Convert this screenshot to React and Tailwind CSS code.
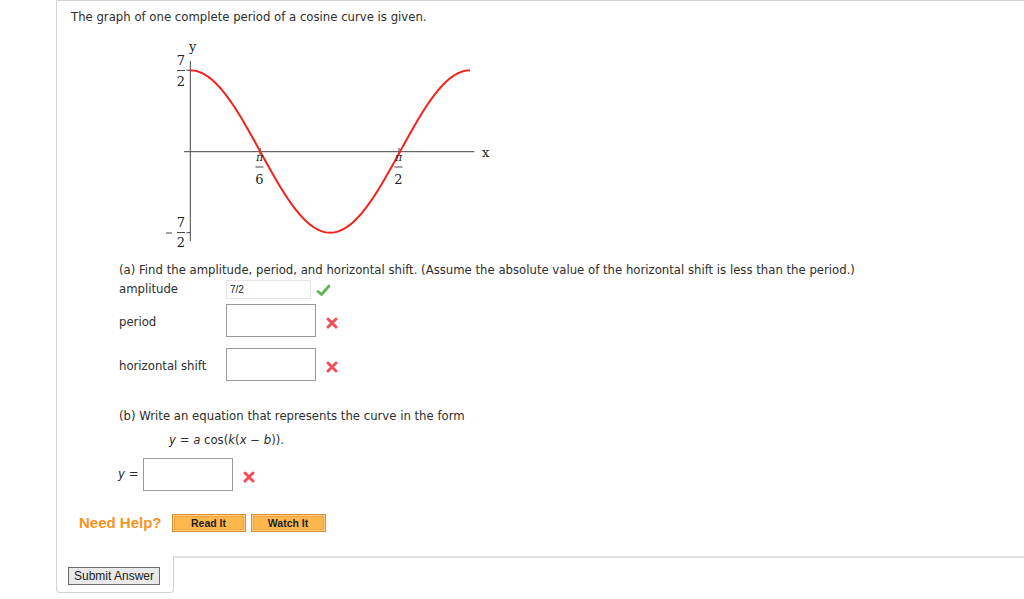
import React from 'react';

// Cosine curve in graph-local pixel coordinates
const X0 = 39.3;
const PERIOD = 279.7;
const MID = 115.5;
const AMP = 81.2;

const curvePath = () => {
    const pts = [];
    for (let i = 0; i <= 140; i++) {
        const x = X0 + (PERIOD * i) / 140;
        const y = MID - AMP * Math.cos((2 * Math.PI * (x - X0)) / PERIOD);
        pts.push(`${i === 0 ? 'M' : 'L'}${x.toFixed(2)} ${y.toFixed(2)}`);
    }
    return pts.join(' ');
};

const Fraction = ({ x, numC, barY, denC, num, den, numItalic }) => (
    <g fontFamily="'DejaVu Serif', 'Liberation Serif', serif" fontSize="13" fill="#222" textAnchor="middle">
        <text x={x} y={numC} dominantBaseline="central" fontStyle={numItalic ? 'italic' : 'normal'} fontSize={numItalic ? 11 : 13}>{num}</text>
        <line x1={x - 4} y1={barY} x2={x + 4} y2={barY} stroke="#333" strokeWidth="0.9" />
        <text x={x} y={denC} dominantBaseline="central">{den}</text>
    </g>
);

const Graph = () => (
    <svg width="350" height="215" className="ml-[80px] mt-[12px] block">
        {/* axes */}
        <line x1="33" y1="115.7" x2="323.3" y2="115.7" stroke="#444" strokeWidth="1" />
        <line x1="39.3" y1="25" x2="39.3" y2="205" stroke="#444" strokeWidth="1" />
        {/* ticks */}
        <line x1="35.5" y1="34.3" x2="39.3" y2="34.3" stroke="#444" strokeWidth="1" />
        <line x1="35.5" y1="196.7" x2="39.3" y2="196.7" stroke="#444" strokeWidth="1" />
        <line x1="109" y1="112" x2="109" y2="119" stroke="#444" strokeWidth="1" />
        <line x1="248" y1="112" x2="248" y2="119" stroke="#444" strokeWidth="1" />
        {/* curve */}
        <path d={curvePath()} stroke="#f5211b" strokeWidth="2" fill="none" />
        {/* labels */}
        <text x="38" y="15" fontFamily="'DejaVu Serif', 'Liberation Serif', serif" fontSize="13" fill="#222">y</text>
        <text x="331" y="121" fontFamily="'DejaVu Serif', 'Liberation Serif', serif" fontSize="13" fill="#222">x</text>
        <Fraction x={30} numC={24} barY={34.5} denC={45} num="7" den="2" />
        <Fraction x={30} numC={186} barY={196.5} denC={206} num="7" den="2" />
        <line x1="15" y1="197" x2="21" y2="197" stroke="#333" strokeWidth="0.9" />
        <Fraction x={108.5} numC={121} barY={131} denC={143} num="π" den="6" numItalic />
        <Fraction x={247.5} numC={121} barY={131} denC={143} num="π" den="2" numItalic />
    </svg>
);

const Check = () => (
    <svg width="15" height="13" viewBox="0 0 15 13" className="ml-[5px] mt-[2px]">
        <path d="M2 7.5 L5.5 10.5 L13 2" stroke="#5fb25a" strokeWidth="2.8" fill="none" strokeLinecap="round" strokeLinejoin="round" />
    </svg>
);

const Cross = () => (
    <svg width="12" height="12" viewBox="0 0 12 12">
        <path d="M2 2 L10 10 M10 2 L2 10" stroke="#ef4f56" strokeWidth="3" strokeLinecap="round" />
    </svg>
);

const HelpButton = ({ label, w }) => (
    <button className={`${w} h-[18px] border border-[#dc8a2c] bg-[#fdb74c] shadow-[inset_0_0_0_1px_#fcd08a,inset_0_0_0_2px_#f0a43e] text-[10.5px] font-bold text-[#1f1f1f] font-['Liberation_Sans',Arial,sans-serif] leading-none`}>
        {label}
    </button>
);

export default function App() {
    return (
        <div className="w-[1024px] h-[599px] bg-white overflow-hidden font-['DejaVu_Sans',Verdana,sans-serif] text-[11.7px] text-[#2e2e2e]">
            <div className="ml-[56px] h-[556px] border-l border-t border-[#d4d4d4] pl-[14px] pt-[9px]">
                <p className="leading-[14px]">The graph of one complete period of a cosine curve is given.</p>

                <Graph />

                <div className="ml-[48px]">
                    <p className="mt-[12px] leading-[14px]">
                        (a) Find the amplitude, period, and horizontal shift. (Assume the absolute value of the horizontal shift is less than the period.)
                    </p>

                    {/* amplitude */}
                    <div className="mt-[3px] flex items-center h-[19px]">
                        <span className="w-[107px]">amplitude</span>
                        <div className="w-[85px] h-[19px] border border-[#e6e6e6] pl-[3px] flex items-center text-[10px] text-[#222] font-['Liberation_Sans',Arial,sans-serif]">7/2</div>
                        <Check />
                    </div>

                    {/* period */}
                    <div className="mt-[5px] flex items-center h-[33px]">
                        <span className="w-[107px] pt-[5px]">period</span>
                        <div className="w-[90px] h-[33px] border border-[#9a9a9a] bg-white"></div>
                        <span className="ml-[10px] mt-[4px]"><Cross /></span>
                    </div>

                    {/* horizontal shift */}
                    <div className="mt-[11px] flex items-center h-[33px]">
                        <span className="w-[107px] pt-[5px]">horizontal shift</span>
                        <div className="w-[90px] h-[33px] border border-[#9a9a9a] bg-white"></div>
                        <span className="ml-[10px] mt-[4px]"><Cross /></span>
                    </div>

                    <p className="mt-[28px] leading-[14px]">(b) Write an equation that represents the curve in the form</p>
                    <p className="mt-[10px] ml-[50px] leading-[14px]">
                        <i>y</i> = <i>a</i> cos(<i>k</i>(<i>x</i> − <i>b</i>)).
                    </p>

                    {/* y = */}
                    <div className="mt-[11px] flex items-center h-[33px] -ml-[1px]">
                        <span className="w-[25px] pt-[1px]"><i>y</i> =</span>
                        <div className="w-[90px] h-[33px] border border-[#9a9a9a] bg-white"></div>
                        <span className="ml-[10px] mt-[4px]"><Cross /></span>
                    </div>
                </div>

                {/* need help */}
                <div className="mt-[23px] ml-[8px] flex items-center h-[18px]">
                    <span className="text-[15px] font-bold text-[#f7941d] font-['Liberation_Sans',Arial,sans-serif] mr-[10px]">Need Help?</span>
                    <HelpButton label="Read It" w="w-[74px]" />
                    <span className="w-[5px]"></span>
                    <HelpButton label="Watch It" w="w-[75px]" />
                </div>
            </div>

            {/* bottom tab */}
            <div className="ml-[56px] flex h-[37px]">
                <div className="w-[118px] border-l border-b border-r border-[#d4d4d4] rounded-b-[4px] pl-[11px] pt-[11px]">
                    <button className="w-[92px] h-[18px] border border-[#6b6b6b] bg-[#e9e9e9] text-[12px] text-[#222] leading-none font-['Liberation_Sans',Arial,sans-serif]">
                        Submit Answer
                    </button>
                </div>
                <div className="flex-1 border-t-2 border-[#e2e2e2]"></div>
            </div>
        </div>
    );
}
